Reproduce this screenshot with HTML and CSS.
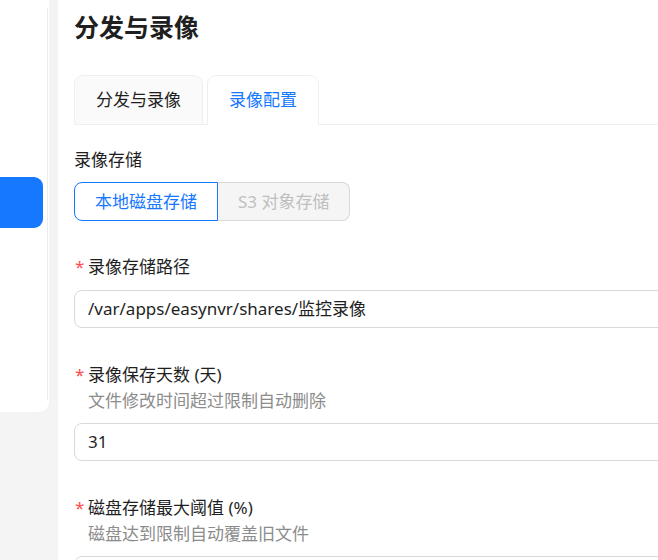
FILE: index.html
```html
<!DOCTYPE html>
<html lang="zh-CN">
<head>
    <meta charset="UTF-8">
    <meta name="viewport" content="width=device-width, initial-scale=1.0">
    <title>分发与录像</title>
    <link rel="stylesheet" href="styles.css">
</head>
<body>
    <!-- Sidebar -->
    <aside class="sidebar">
        <div class="menu-item active"></div>
    </aside>

    <!-- Main Panel -->
    <main class="panel">
        <h1 class="page-title">分发与录像</h1>

        <div class="tabs">
            <div class="tab">分发与录像</div>
            <div class="tab active">录像配置</div>
        </div>

        <div class="section-label">录像存储</div>
        <div class="radio-group">
            <span class="radio-btn checked">本地磁盘存储</span>
            <span class="radio-btn disabled">S3 对象存储</span>
        </div>

        <div class="form-item">
            <div class="label"><span class="req">*</span>录像存储路径</div>
            <div class="input">/var/apps/easynvr/shares/监控录像</div>
        </div>

        <div class="form-item">
            <div class="label"><span class="req">*</span>录像保存天数 (天)</div>
            <div class="help">文件修改时间超过限制自动删除</div>
            <div class="input">31</div>
        </div>

        <div class="form-item">
            <div class="label"><span class="req">*</span>磁盘存储最大阈值 (%)</div>
            <div class="help">磁盘达到限制自动覆盖旧文件</div>
            <div class="input"></div>
        </div>
    </main>
</body>
</html>
```

FILE: styles.css
```css
:root {
    --primary: #1677ff;
    --text: #1f1f1f;
    --text-secondary: #8c8c8c;
    --border: #d9d9d9;
    --border-light: #efefef;
    --page-bg: #f4f4f4;
}

* {
    margin: 0;
    padding: 0;
    box-sizing: border-box;
}

body {
    font-family: "Noto Sans", "Noto Sans CJK SC", sans-serif;
    background: var(--page-bg);
    color: var(--text);
    display: flex;
    align-items: flex-start;
    height: 560px;
    overflow: hidden;
    font-size: 17px;
}

/* Sidebar */
.sidebar {
    width: 49px;
    height: 412px;
    flex-shrink: 0;
    background: #fff;
    border-bottom-right-radius: 10px;
    position: relative;
    padding-top: 177px;
}

.sidebar::after {
    content: '';
    position: absolute;
    top: 8px;
    bottom: 12px;
    right: 1px;
    width: 1px;
    background: #ececec;
}

.menu-item {
    width: 43px;
    height: 51px;
    border-radius: 0 9px 9px 0;
}

.menu-item.active {
    background: var(--primary);
}

/* Main */
.panel {
    margin-left: 9px;
    flex: 1;
    min-width: 0;
    height: 560px;
    background: #fff;
    padding-left: 16px;
    overflow: hidden;
}

.page-title {
    margin-top: 10px;
    font-size: 25px;
    line-height: 34px;
    font-weight: 700;
}

/* Tabs */
.tabs {
    display: flex;
    gap: 4px;
    margin-top: 31px;
    border-bottom: 1px solid var(--border-light);
    width: 640px;
}

.tab {
    height: 49px;
    line-height: 48px;
    padding: 0 21px;
    border: 1px solid var(--border-light);
    border-bottom: none;
    border-radius: 9px 9px 0 0;
    background: #fafafa;
}

.tab.active {
    background: #fff;
    color: var(--primary);
    margin-bottom: -1px;
    height: 50px;
}

/* Radio group */
.section-label {
    margin-top: 23px;
    line-height: 24px;
}

.radio-group {
    display: flex;
    margin-top: 10px;
}

.radio-btn {
    height: 39px;
    line-height: 37px;
    padding: 0 20px;
    border: 1px solid var(--border);
}

.radio-btn.checked {
    color: var(--primary);
    border-color: var(--primary);
    border-radius: 8px 0 0 8px;
}

.radio-btn.disabled {
    color: #bfbfbf;
    background: #f5f5f5;
    border-left: none;
    border-radius: 0 8px 8px 0;
}

/* Form items */
.form-item {
    margin-top: 34px;
}

.form-item + .form-item {
    margin-top: 35px;
}

.label {
    line-height: 24px;
    display: flex;
}

.req {
    color: #ff4d4f;
    width: 14px;
    padding-left: 1px;
}

.help {
    color: var(--text-secondary);
    line-height: 24px;
    padding-left: 14px;
    margin-top: 2px;
}

.input {
    width: 640px;
    height: 38px;
    line-height: 36px;
    margin-top: 11px;
    padding: 0 13px;
    border: 1px solid var(--border);
    border-radius: 8px;
}

.help + .input {
    margin-top: 10px;
}
```
